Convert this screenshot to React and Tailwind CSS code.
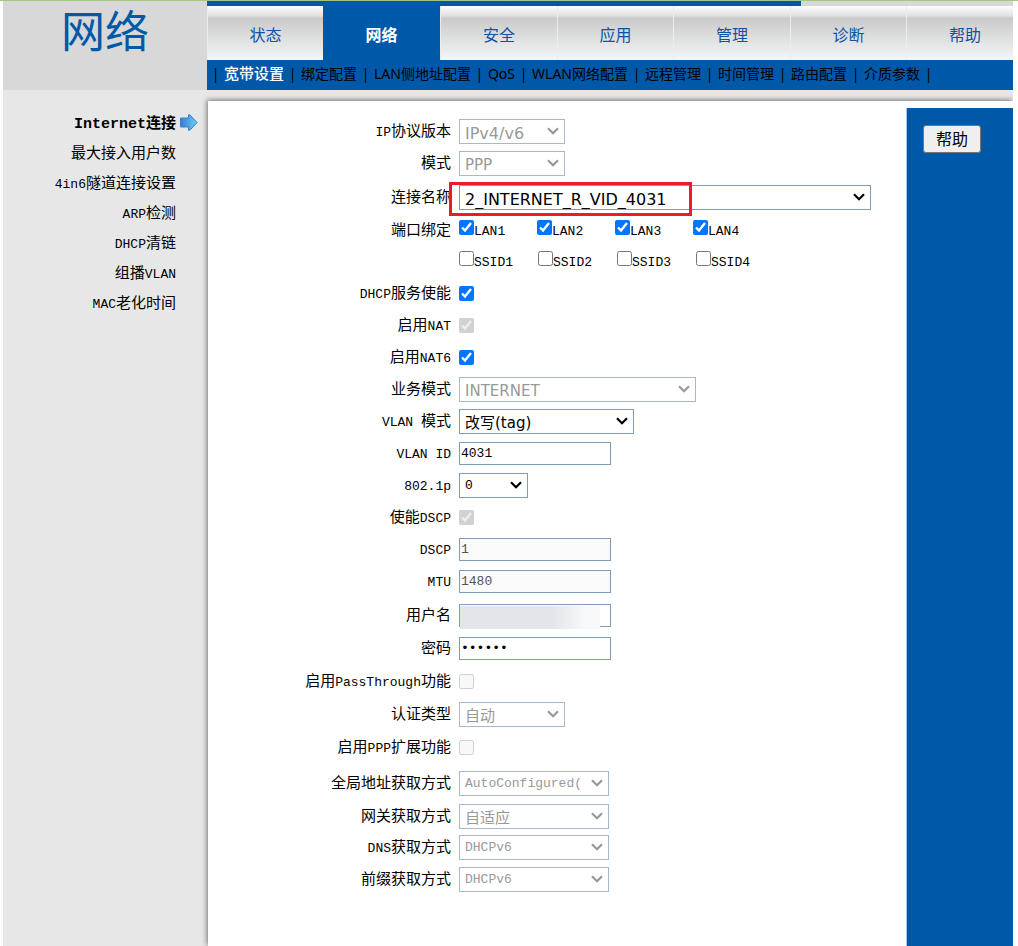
import React from "react";

const tabs = ["状态", "网络", "安全", "应用", "管理", "诊断", "帮助"];

const subTabs = [
  "宽带设置",
  "绑定配置",
  "LAN侧地址配置",
  "QoS",
  "WLAN网络配置",
  "远程管理",
  "时间管理",
  "路由配置",
  "介质参数",
];

const sideItems = [
  "最大接入用户数",
  "4in6隧道连接设置",
  "ARP检测",
  "DHCP清链",
  "组播VLAN",
  "MAC老化时间",
];

const uiFont = "font-['Noto_Sans','Noto_Sans_CJK_SC',sans-serif]";
const verdana = "font-['DejaVu_Sans','Noto_Sans_CJK_SC',sans-serif] text-[15px]";
const verdanaLarge = "font-['DejaVu_Sans','Noto_Sans_CJK_SC',sans-serif] text-[16px]";
const mono = "font-['Liberation_Mono','Noto_Sans_CJK_SC',monospace] text-[13px]";

/* Sets Latin runs one step smaller than the Chinese characters around them. */
function Mixed({ text }) {
  return text
    .split(/([ -~]+)/)
    .filter(Boolean)
    .map((part, i) =>
      /^[ -~]+$/.test(part) ? (
        <span key={i} className="text-[13px]">
          {part}
        </span>
      ) : (
        part
      )
    );
}

function Row({ id, label, height = "h-8", children }) {
  return (
    <div className={`flex items-center gap-2 ${height}`}>
      <label htmlFor={id} className="w-[243px] shrink-0 whitespace-pre pt-1 text-right">
        {label && <Mixed text={label} />}
      </label>
      {children}
    </div>
  );
}

function Select({ id, value, width, font = verdana, disabled }) {
  return (
    <div className={`relative h-[25px] ${width}`}>
      <select
        id={id}
        disabled={disabled}
        className={`peer h-full w-full appearance-none border border-[#7f9db9] bg-white pl-[5px] pr-5 pt-0.5 text-black disabled:border-[#a5bace] disabled:text-[#999999] disabled:opacity-100 ${font}`}
      >
        <option>{value}</option>
      </select>
      <svg
        className="pointer-events-none absolute inset-y-0 right-1.5 my-auto text-black peer-disabled:text-[#999999]"
        width="12"
        height="8"
        viewBox="0 0 12 8"
        fill="none"
        stroke="currentColor"
        strokeWidth="2.2"
        aria-hidden="true"
      >
        <path d="M1 1.200l5 5 5-5" />
      </svg>
    </div>
  );
}

function Field({ id, ...rest }) {
  return (
    <input
      id={id}
      className={`h-[23px] w-[152px] border border-[#7f9db9] bg-white px-px text-black disabled:bg-[#fafafa] disabled:text-[#545454] ${mono}`}
      {...rest}
    />
  );
}

function Check({ id, ...rest }) {
  return <input id={id} type="checkbox" className="size-[15px] shrink-0" {...rest} />;
}

function CheckGroup({ names, checked, columns }) {
  return (
    <div className={`grid ${columns}`}>
      {names.map((n) => (
        <label key={n} className="flex h-5 items-start">
          <Check defaultChecked={checked} />
          <span className="self-end text-[13px] leading-4">{n}</span>
        </label>
      ))}
    </div>
  );
}

function Arrow() {
  return (
    <svg width="18" height="18" viewBox="0 0 18 18" aria-hidden="true">
      <defs>
        <linearGradient id="arrowFill" x1="0" x2="1">
          <stop offset="0" stopColor="#2f7fd0" />
          <stop offset="1" stopColor="#6fd0f5" />
        </linearGradient>
      </defs>
      <path
        d="M.5 4h8V.7h1.200L17.200 8.500l-7.500 7.800H8.500V13h-8z"
        fill="url(#arrowFill)"
        stroke="#3d7fc4"
      />
    </svg>
  );
}

function Header() {
  return (
    <header className="flex h-[89px] bg-[#d8d8d8]">
      <h1 className="w-[204px] shrink-0 text-center text-[44px] leading-[70px] text-[#0058a9]">
        网络
      </h1>
      <div className="min-w-0 flex-1 overflow-hidden">
        <div className="h-[5px] w-[594px] bg-[#0058a9]" />
        <nav className="grid h-[54px] grid-cols-[116px_117px_117px_116px_117px_116px_117px] bg-[#0058a9]">
          {tabs.map((t) => (
            <a
              key={t}
              href="#"
              className={`flex items-center justify-center pt-2 text-[16px] ${
                t === "网络"
                  ? "font-bold text-white"
                  : "border-l border-[#ececec] bg-[linear-gradient(#ffffff_0px,#e0e0e0_10px,#cacaca_12px,#f4f6f7_54px)] text-[#0f52a4]"
              }`}
            >
              {t}
            </a>
          ))}
        </nav>
        <nav
          className={`flex h-[30px] whitespace-nowrap bg-[#0058a9] text-[14px] leading-[27px] text-black ${uiFont}`}
        >
          <span className="w-[17px] text-center">|</span>
          {subTabs.map((t, i) => (
            <React.Fragment key={t}>
              <a href="#" className={i === 0 ? "text-[15px] font-medium text-white" : ""}>
                {t}
              </a>
              <span className="w-[17px] text-center">|</span>
            </React.Fragment>
          ))}
        </nav>
      </div>
    </header>
  );
}

function Sidebar() {
  return (
    <aside className="w-[205px] shrink-0 pt-5">
      <ul className="text-right leading-[30px]">
        <li className="flex h-[30px] justify-end pr-[10px]">
          <a href="#" className="font-bold">
            Internet连接
          </a>
          <span className="pl-1 pt-1">
            <Arrow />
          </span>
        </li>
        {sideItems.map((t) => (
          <li key={t} className="h-[30px] pr-8">
            <a href="#">
              <Mixed text={t} />
            </a>
          </li>
        ))}
      </ul>
    </aside>
  );
}

function WanForm() {
  return (
    <form className="min-w-0 flex-1 pt-[14px]">
      <Row id="ipver" label="IP协议版本">
        <Select id="ipver" value="IPv4/v6" width="w-[106px]" font={verdanaLarge} disabled />
      </Row>
      <Row id="mode" label="模式">
        <Select id="mode" value="PPP" width="w-[106px]" disabled />
      </Row>
      <Row id="conn" label="连接名称" height="h-9">
        <div className="relative">
          <Select
            id="conn"
            value="2_INTERNET_R_VID_4031"
            width="w-[412px]"
            font={verdanaLarge}
          />
          <div className="pointer-events-none absolute -left-2.5 -top-[3px] h-[34px] w-[243px] border-3 border-[#ed1c24]" />
        </div>
      </Row>
      <Row label="端口绑定" height="h-[30px]">
        <CheckGroup
          names={["LAN1", "LAN2", "LAN3", "LAN4"]}
          checked
          columns="grid-cols-[repeat(4,78px)]"
        />
      </Row>
      <Row>
        <CheckGroup
          names={["SSID1", "SSID2", "SSID3", "SSID4"]}
          checked={false}
          columns="grid-cols-[repeat(4,79px)]"
        />
      </Row>
      <Row id="dhcp" label="DHCP服务使能">
        <Check id="dhcp" defaultChecked />
      </Row>
      <Row id="nat" label="启用NAT">
        <Check id="nat" defaultChecked disabled />
      </Row>
      <Row id="nat6" label="启用NAT6">
        <Check id="nat6" defaultChecked />
      </Row>
      <Row id="service" label="业务模式">
        <Select id="service" value="INTERNET" width="w-[237px]" disabled />
      </Row>
      <Row id="vlanmode" label="VLAN 模式">
        <Select id="vlanmode" value="改写(tag)" width="w-[175px]" />
      </Row>
      <Row id="vlanid" label="VLAN ID">
        <Field id="vlanid" defaultValue="4031" />
      </Row>
      <Row id="p8021" label="802.1p">
        <Select id="p8021" value="0" width="w-[69px]" font={mono} />
      </Row>
      <Row id="dscpon" label="使能DSCP">
        <Check id="dscpon" defaultChecked disabled />
      </Row>
      <Row id="dscp" label="DSCP">
        <Field id="dscp" defaultValue="1" disabled />
      </Row>
      <Row id="mtu" label="MTU">
        <Field id="mtu" defaultValue="1480" disabled />
      </Row>
      <Row id="user" label="用户名" height="h-9">
        <div className="relative flex">
          <Field id="user" />
          <div className="pointer-events-none absolute left-px top-0.5 h-[23px] w-[140px] bg-linear-to-r from-[#e4e5e8] from-65% to-[#f8f9fb] to-90%" />
        </div>
      </Row>
      <Row id="pwd" label="密码" height="h-[30px]">
        <Field id="pwd" type="password" defaultValue="123456" />
      </Row>
      <Row id="pass" label="启用PassThrough功能" height="h-9">
        <Check id="pass" disabled />
      </Row>
      <Row id="auth" label="认证类型" height="h-[30px]">
        <Select id="auth" value="自动" width="w-[106px]" disabled />
      </Row>
      <Row id="pppext" label="启用PPP扩展功能" height="h-9">
        <Check id="pppext" disabled />
      </Row>
      <Row id="addr" label="全局地址获取方式" height="h-9">
        <Select id="addr" value="AutoConfigured(" width="w-[150px]" font={mono} disabled />
      </Row>
      <Row id="gateway" label="网关获取方式" height="h-[30px]">
        <Select id="gateway" value="自适应" width="w-[150px]" disabled />
      </Row>
      <Row id="dns" label="DNS获取方式">
        <Select id="dns" value="DHCPv6" width="w-[150px]" font={mono} disabled />
      </Row>
      <Row id="prefix" label="前缀获取方式">
        <Select id="prefix" value="DHCPv6" width="w-[150px]" font={mono} disabled />
      </Row>
    </form>
  );
}

export default function App() {
  return (
    <div className="flex min-h-screen flex-col border-t border-[#a3c585] bg-white pl-[3px] pr-[5px] font-['Liberation_Mono','Noto_Sans_CJK_SC',monospace] text-[15px] text-black">
      <Header />
      <div className="flex flex-1 overflow-hidden bg-[#e7e7e7]">
        <Sidebar />
        <main className="mt-[11px] flex min-w-0 flex-1 bg-white shadow-[-1px_-1px_5px_0px_rgba(0,0,0,0.5)]">
          <WanForm />
          <aside className="mt-[7px] w-[107px] shrink-0 border-l border-[#a9c8e4] bg-[#0058a9] px-4 pt-[17px]">
            <button
              type="button"
              className={`flex h-7 items-center rounded-[3px] border border-[#767676] bg-[#efefef] px-3 text-[16px] ${uiFont}`}
            >
              帮助
            </button>
          </aside>
        </main>
      </div>
    </div>
  );
}
